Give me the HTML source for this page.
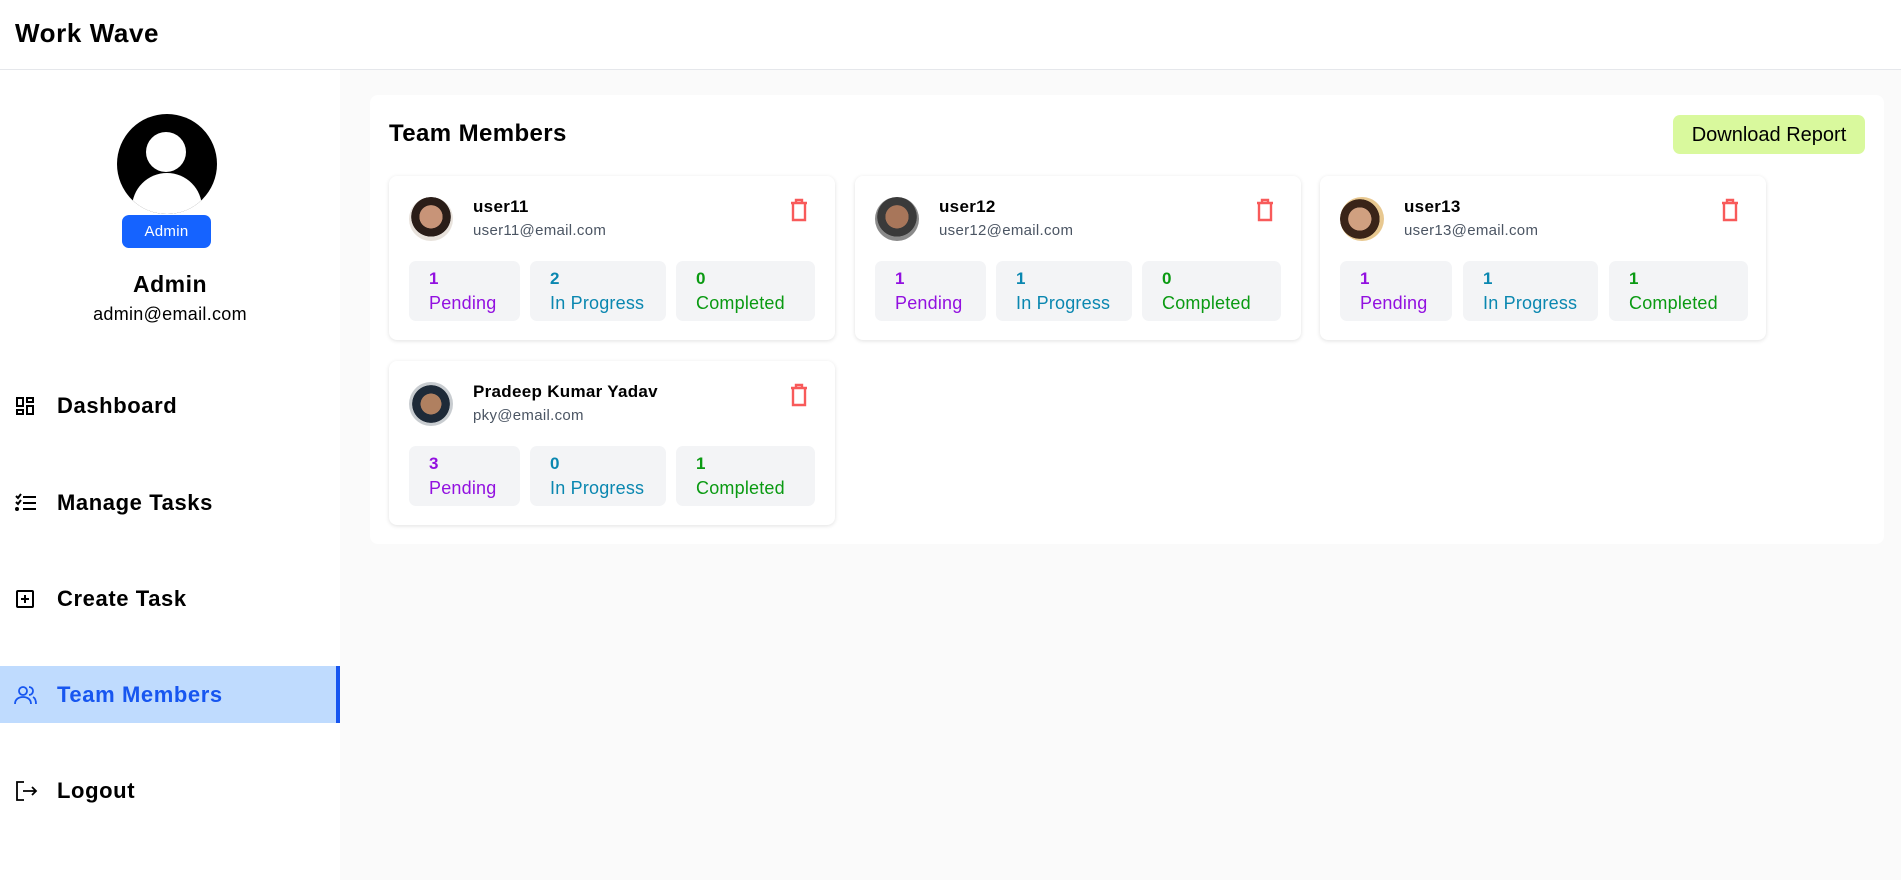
<!DOCTYPE html>
<html><head><meta charset="utf-8"><style>
*{box-sizing:border-box;margin:0;padding:0}
body{width:1901px;height:880px;overflow:hidden;background:#fafafa;font-family:"Liberation Sans",sans-serif;position:relative;color:#000}
.hdr{position:absolute;left:0;top:0;width:1901px;height:70px;background:#fff;border-bottom:1px solid #e5e7eb}
.logo{position:absolute;left:15px;top:18px;font-size:26px;font-weight:700;letter-spacing:.6px}
.side{position:absolute;left:0;top:70px;width:340px;height:810px;background:#fff}
.av{position:absolute;left:117px;top:114px;width:100px;height:100px;border-radius:50%;background:#000;overflow:hidden}
.av .h{position:absolute;left:29px;top:18px;width:40px;height:40px;border-radius:50%;background:#fff}
.av .b{position:absolute;left:15px;top:59px;width:70px;height:70px;border-radius:50%;background:#fff}
.badge{position:absolute;left:122px;top:215px;width:89px;height:33px;background:#1563ff;color:#fff;border-radius:7px;font-size:15px;text-align:center;line-height:33px;letter-spacing:.3px}
.an{position:absolute;left:0;width:340px;text-align:center;top:271px;font-size:23px;font-weight:700;letter-spacing:.5px}
.ae{position:absolute;left:0;width:340px;text-align:center;top:304px;font-size:18px;letter-spacing:.3px}
.nav{position:absolute;left:0;width:340px;height:57px;display:flex;align-items:center;font-size:22px;font-weight:700;letter-spacing:.6px}
.nav svg{position:absolute;left:14px}
.nav span{position:absolute;left:57px}
.act{background:#bfdbfe;color:#1756f0;border-right:4px solid #1756f0}
.panel{position:absolute;left:370px;top:95px;width:1514px;height:449px;background:#fff;border-radius:8px}
.title{position:absolute;left:389px;top:120px;font-size:24px;font-weight:700;letter-spacing:.4px}
.dl{position:absolute;left:1673px;top:115px;width:192px;height:39px;background:#d9f99d;border-radius:7px;font-size:20px;text-align:center;line-height:40px}
.card{position:absolute;width:446px;height:164px;background:#fff;border-radius:8px;box-shadow:0 1px 4px rgba(0,0,0,.12)}
.pic{position:absolute;left:20px;top:21px;width:44px;height:44px;border-radius:50%;overflow:hidden}
.nm{position:absolute;left:84px;top:21px;font-size:17px;font-weight:700;letter-spacing:.3px}
.em{position:absolute;left:84px;top:46px;font-size:15px;color:#4b5563;letter-spacing:.3px}
.tr{position:absolute;left:401px;top:22px}
.st{position:absolute;top:85px;height:60px;background:#f3f4f6;border-radius:7px;padding:5px 0 0 20px;font-size:18px;line-height:25px;letter-spacing:.2px}
.st b{display:block;font-size:17px}
.p{color:#9210e0}.i{color:#0a87b0}.c{color:#0a9a12}
</style></head><body>
<div class="hdr"><div class="logo">Work Wave</div></div>
<div class="side">
</div>
<div class="av"><div class="h"></div><div class="b"></div></div>
<div class="badge">Admin</div>
<div class="an">Admin</div>
<div class="ae">admin@email.com</div>
<div class="nav" style="top:377px"><svg width="22" height="22" viewBox="0 0 22 22" fill="none" stroke="#000" stroke-width="2"><rect x="3" y="3" width="6" height="8"/><rect x="13" y="3" width="6" height="4"/><rect x="3" y="15" width="6" height="4"/><rect x="13" y="11" width="6" height="8"/></svg><span>Dashboard</span></div>
<div class="nav" style="top:474px"><svg width="24" height="22" viewBox="0 0 24 22" fill="none" stroke="#000" stroke-width="2"><path d="M9 5h13M9 11h13M9 17h13M2 4l2 2 3-4M2 10l2 2 3-4"/><circle cx="3" cy="17" r="1" fill="#000"/></svg><span>Manage Tasks</span></div>
<div class="nav" style="top:570px"><svg width="22" height="22" viewBox="0 0 22 22" fill="none" stroke="#000" stroke-width="2"><rect x="3" y="3" width="16" height="16" rx="1"/><path d="M11 7v8M7 11h8"/></svg><span>Create Task</span></div>
<div class="nav act" style="top:666px"><svg width="24" height="22" viewBox="0 0 24 22" fill="none" stroke="#1756f0" stroke-width="1.8"><circle cx="9" cy="7" r="4"/><path d="M1 20c0-5 4-7 8-7s8 2 8 7M15 3a4 4 0 0 1 0 8M19 13c2 1 3 3 3 7"/></svg><span>Team Members</span></div>
<div class="nav" style="top:762px"><svg width="24" height="24" viewBox="0 0 24 24" fill="none" stroke="#000" stroke-width="1.8"><path d="M10 3H3v18h7M9 12h13M18 8l4 4-4 4"/></svg><span>Logout</span></div>

<div class="panel"></div>
<div class="title">Team Members</div>
<div class="dl">Download Report</div>

<div class="card" style="left:389px;top:176px">
<div class="pic" style="background:radial-gradient(circle at 50% 45%,#c89478 0 35%,#2a1d18 36% 60%,#e8e2dc 61%)"></div>
<div class="nm">user11</div><div class="em">user11@email.com</div>
<svg class="tr" width="18" height="24" viewBox="0 0 18 24" fill="none" stroke="#f85a5a" stroke-width="2.4"><path d="M1 5h16M6 5V2h6v3M3 6v16h12V6"/></svg>
<div class="st p" style="left:20px;width:111px"><b>1</b>Pending</div>
<div class="st i" style="left:141px;width:136px"><b>2</b>In Progress</div>
<div class="st c" style="left:287px;width:139px"><b>0</b>Completed</div>
</div>
<div class="card" style="left:855px;top:176px">
<div class="pic" style="background:radial-gradient(circle at 50% 45%,#a8765a 0 35%,#3a3a3a 36% 60%,#8a8a8a 61%)"></div>
<div class="nm">user12</div><div class="em">user12@email.com</div>
<svg class="tr" width="18" height="24" viewBox="0 0 18 24" fill="none" stroke="#f85a5a" stroke-width="2.4"><path d="M1 5h16M6 5V2h6v3M3 6v16h12V6"/></svg>
<div class="st p" style="left:20px;width:111px"><b>1</b>Pending</div>
<div class="st i" style="left:141px;width:136px"><b>1</b>In Progress</div>
<div class="st c" style="left:287px;width:139px"><b>0</b>Completed</div>
</div>
<div class="card" style="left:1320px;top:176px">
<div class="pic" style="background:radial-gradient(circle at 45% 50%,#d0a080 0 35%,#3a2418 36% 60%,#e8c890 61%)"></div>
<div class="nm">user13</div><div class="em">user13@email.com</div>
<svg class="tr" width="18" height="24" viewBox="0 0 18 24" fill="none" stroke="#f85a5a" stroke-width="2.4"><path d="M1 5h16M6 5V2h6v3M3 6v16h12V6"/></svg>
<div class="st p" style="left:20px;width:112px"><b>1</b>Pending</div>
<div class="st i" style="left:143px;width:135px"><b>1</b>In Progress</div>
<div class="st c" style="left:289px;width:139px"><b>1</b>Completed</div>
</div>
<div class="card" style="left:389px;top:361px">
<div class="pic" style="background:radial-gradient(circle at 50% 50%,#b08060 0 33%,#1e2a38 34% 60%,#c8ccd0 61%)"></div>
<div class="nm">Pradeep Kumar Yadav</div><div class="em">pky@email.com</div>
<svg class="tr" width="18" height="24" viewBox="0 0 18 24" fill="none" stroke="#f85a5a" stroke-width="2.4"><path d="M1 5h16M6 5V2h6v3M3 6v16h12V6"/></svg>
<div class="st p" style="left:20px;width:111px"><b>3</b>Pending</div>
<div class="st i" style="left:141px;width:136px"><b>0</b>In Progress</div>
<div class="st c" style="left:287px;width:139px"><b>1</b>Completed</div>
</div>
</body></html>
